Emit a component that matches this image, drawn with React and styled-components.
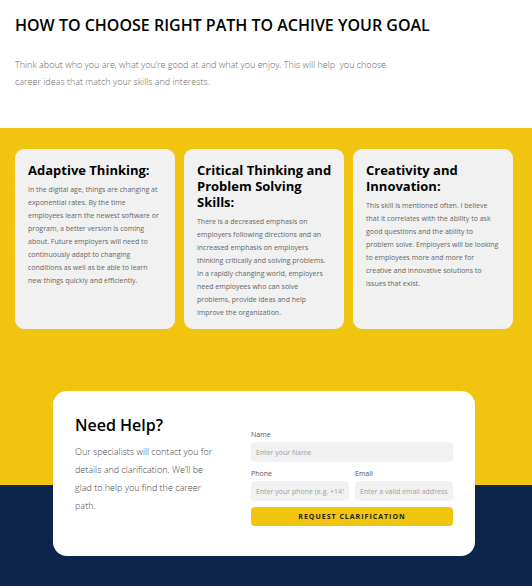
import React from "react";
import styled, { createGlobalStyle } from "styled-components";

const GlobalStyle = createGlobalStyle`
  *, *::before, *::after { box-sizing: border-box; }
  body {
    margin: 0;
    background: #0d254a;
    color: #000000;
    font-family: "Open Sans", "Noto Sans", sans-serif;
  }
  h1, h2, h3, p { margin: 0; }
`;

const Intro = styled.header`
  padding: 13px 15px 38px;
  background: #ffffff;
`;

const PageTitle = styled.h1`
  font-size: 16px;
  line-height: 24px;
  font-weight: 600;
`;

const Lead = styled.p`
  max-width: 385px;
  margin-top: 19px;
  color: #666666;
  font-size: 9px;
  line-height: 17px;
  font-weight: 300;
  white-space: pre-wrap;
`;

const Skills = styled.section`
  display: grid;
  grid-template-columns: repeat(3, 1fr);
  gap: 9px;
  padding: 21px 19px 156px 15px;
  background: #f1c40f;
`;

const SkillCard = styled.article`
  min-height: 180px;
  padding: 13px 12px 10px 13px;
  border-radius: 9px;
  background: #f1f1f1;
`;

const SkillTitle = styled.h2`
  font-size: 13px;
  line-height: 16px;
  font-weight: 700;
`;

const SkillText = styled.p`
  margin-top: 5px;
  padding-right: 2px;
  color: #666666;
  font-size: 7px;
  line-height: 13px;
`;

const Help = styled.section`
  display: grid;
  padding: 0 57px 30px 53px;
  background: #0d254a;
`;

const HelpCard = styled.div`
  display: grid;
  grid-template-columns: 145px 1fr;
  gap: 31px;
  margin-top: -94px;
  padding: 22px 22px 30px;
  border-radius: 14px;
  background: #ffffff;
`;

const HelpTitle = styled.h2`
  font-size: 16px;
  line-height: 24px;
  font-weight: 600;
`;

const HelpText = styled.p`
  margin-top: 6px;
  color: #444444;
  font-size: 9px;
  line-height: 18px;
  font-weight: 300;
`;

const Form = styled.form`
  display: grid;
  grid-template-columns: 1fr 1fr;
  gap: 6px;
  padding-top: 16px;
`;

const Field = styled.div`
  grid-column: ${({ $wide }) => ($wide ? "1 / -1" : "auto")};
  min-width: 0;
`;

const Label = styled.label`
  display: block;
  margin-bottom: 1px;
  color: #555555;
  font-size: 7px;
  line-height: 12px;
`;

const Input = styled.input`
  display: block;
  width: 100%;
  height: 20px;
  padding: 0 5px;
  border: 0;
  border-radius: 4px;
  background: #f1f1f1;
  color: #333333;
  font: inherit;
  font-size: 7px;
  &::placeholder { color: #a0a0a0; opacity: 1; }
`;

const SubmitButton = styled.button`
  grid-column: 1 / -1;
  height: 19px;
  padding: 0;
  border: 0;
  border-radius: 4px;
  background: #f1c40f;
  color: #222222;
  font: inherit;
  font-size: 7px;
  font-weight: 700;
  letter-spacing: 1px;
  text-transform: uppercase;
  cursor: pointer;
`;

const skills = [
  {
    title: "Adaptive Thinking:",
    text: "In the digital age, things are changing at exponential rates. By the time employees learn the newest software or program, a better version is coming about. Future employers will need to continuously adapt to changing conditions as well as be able to learn new things quickly and efficiently.",
  },
  {
    title: "Critical Thinking and Problem Solving Skills:",
    text: "There is a decreased emphasis on employers following directions and an increased emphasis on employers thinking critically and solving problems. In a rapidly changing world, employers need employees who can solve problems, provide ideas and help improve the organization.",
  },
  {
    title: "Creativity and Innovation:",
    text: "This skill is mentioned often. I believe that it correlates with the ability to ask good questions and the ability to problem solve. Employers will be looking to employees more and more for creative and innovative solutions to issues that exist.",
  },
];

const fields = [
  { id: "name", label: "Name", type: "text", placeholder: "Enter your Name", wide: true },
  { id: "phone", label: "Phone", type: "tel", placeholder: "Enter your phone (e.g. +14155552675)" },
  { id: "email", label: "Email", type: "email", placeholder: "Enter a valid email address" },
];

export default function App() {
  return (
    <>
      <GlobalStyle />
      <Intro>
        <PageTitle>HOW TO CHOOSE RIGHT PATH TO ACHIVE YOUR GOAL</PageTitle>
        <Lead>
          {"Think about who you are, what you’re good at and what you enjoy. This will help  you choose career ideas that match your skills and interests."}
        </Lead>
      </Intro>
      <Skills>
        {skills.map((skill) => (
          <SkillCard key={skill.title}>
            <SkillTitle>{skill.title}</SkillTitle>
            <SkillText>{skill.text}</SkillText>
          </SkillCard>
        ))}
      </Skills>
      <Help>
        <HelpCard>
          <div>
            <HelpTitle>Need Help?</HelpTitle>
            <HelpText>
              Our specialists will contact you for details and clarification. We’ll be glad to help you find the career path.
            </HelpText>
          </div>
          <Form onSubmit={(event) => event.preventDefault()}>
            {fields.map(({ id, label, type, placeholder, wide }) => (
              <Field key={id} $wide={wide}>
                <Label htmlFor={id}>{label}</Label>
                <Input id={id} name={id} type={type} placeholder={placeholder} />
              </Field>
            ))}
            <SubmitButton type="submit">Request Clarification</SubmitButton>
          </Form>
        </HelpCard>
      </Help>
    </>
  );
}
